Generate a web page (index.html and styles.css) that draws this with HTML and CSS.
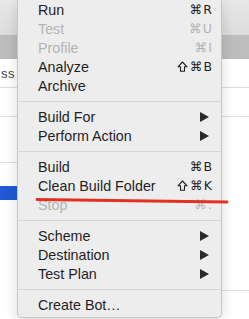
FILE: index.html
```html
<!DOCTYPE html>
<html lang="en">
<head>
  <meta charset="UTF-8">
  <title>Product Menu</title>
  <link rel="stylesheet" href="styles.css">
</head>
<body>
  <div class="window">
    <div class="toolbar"></div>
    <div class="tabbar"></div>
    <div class="content">
      <div class="side">
        <div class="row row-text">ss</div>
        <div class="row"></div>
        <div class="row row-tall"></div>
        <div class="row-selected"></div>
      </div>
      <div class="main">
        <div class="row"></div>
        <div class="row"></div>
        <div class="row row-long"></div>
      </div>
    </div>
  </div>

  <!-- Product menu -->
  <div class="menu">
    <div class="item"><span>Run</span><span class="keys">⌘R</span></div>
    <div class="item disabled"><span>Test</span><span class="keys">⌘U</span></div>
    <div class="item disabled"><span>Profile</span><span class="keys">⌘I</span></div>
    <div class="item"><span>Analyze</span><span class="keys"><svg class="shift" viewBox="0 0 11 11"><path d="M5.5 1 L10 5.8 H7.5 V10.2 H3.5 V5.8 H1 Z"/></svg>⌘B</span></div>
    <div class="item"><span>Archive</span></div>
    <div class="separator"></div>
    <div class="item"><span>Build For</span><span class="arrow"></span></div>
    <div class="item"><span>Perform Action</span><span class="arrow"></span></div>
    <div class="separator"></div>
    <div class="item"><span>Build</span><span class="keys">⌘B</span></div>
    <div class="item"><span>Clean Build Folder</span><span class="keys"><svg class="shift" viewBox="0 0 11 11"><path d="M5.5 1 L10 5.8 H7.5 V10.2 H3.5 V5.8 H1 Z"/></svg>⌘K</span></div>
    <div class="item disabled"><span>Stop</span><span class="keys">⌘.</span></div>
    <div class="separator"></div>
    <div class="item"><span>Scheme</span><span class="arrow"></span></div>
    <div class="item"><span>Destination</span><span class="arrow"></span></div>
    <div class="item"><span>Test Plan</span><span class="arrow"></span></div>
    <div class="separator"></div>
    <div class="item"><span>Create Bot…</span></div>
  </div>

  <!-- Annotation stroke -->
  <svg class="strike" width="249" height="319" viewBox="0 0 249 319">
    <line x1="37" y1="199.5" x2="227" y2="202" stroke="#e2321f" stroke-width="2.8" stroke-linecap="round"/>
  </svg>
</body>
</html>
```

FILE: styles.css
```css
* {
  margin: 0;
  padding: 0;
  box-sizing: border-box;
}
:root {
  --menu-bg: #ededed;
  --menu-border: #c6c6c6;
  --text: #1f1f1f;
  --text-disabled: #b3b3b3;
  --separator: #d6d6d6;
  --line: #dedede;
  --selection: #2358d6;
}
body {
  width: 249px;
  height: 319px;
  overflow: hidden;
  background: #fff;
  font-family: "Liberation Sans", Arial, sans-serif;
  color: var(--text);
}

/* Window behind the menu */
.toolbar {
  height: 35px;
  background: linear-gradient(#e8e8e8, #dcdcdc);
}
.tabbar {
  height: 24px;
  background: #bdbdbd;
}
.content {
  display: grid;
  grid-template-columns: 120px 1fr;
}
.row {
  height: 29px;
  border-bottom: 1px solid var(--line);
}
.row-text {
  font-size: 13px;
  line-height: 29px;
  color: #444;
  padding-left: 1px;
  letter-spacing: 0.5px;
}
.row-tall {
  height: 46px;
}
.row-selected {
  height: 14px;
  margin-top: 23px;
  background: var(--selection);
}
.row-long {
  height: 174px;
}

/* Menu */
.menu {
  position: absolute;
  left: 17px;
  top: 0;
  width: 205px;
  padding-bottom: 3px;
  background: var(--menu-bg);
  border: 1px solid var(--menu-border);
  border-top: none;
  border-radius: 0 0 5px 5px;
  box-shadow: 0 4px 14px rgba(0, 0, 0, 0.14);
}
.item {
  height: 19px;
  display: flex;
  justify-content: space-between;
  align-items: center;
  padding: 0 9px 0 20px;
  font-size: 14.3px;
  white-space: nowrap;
}
.item.disabled {
  color: var(--text-disabled);
}
.keys {
  display: flex;
  align-items: center;
  font-family: "DejaVu Sans", sans-serif;
  font-size: 12.5px;
  letter-spacing: 1px;
  margin-right: -1px;
}
.shift {
  width: 11px;
  height: 11px;
  margin-right: 2px;
  fill: none;
  stroke: currentColor;
  stroke-width: 1.1;
  stroke-linejoin: round;
}
.arrow {
  width: 0;
  height: 0;
  margin-right: 3px;
  border-top: 5px solid transparent;
  border-bottom: 5px solid transparent;
  border-left: 9px solid #2a2a2a;
}
.separator {
  height: 12px;
  display: flex;
  align-items: center;
}
.separator::before {
  content: "";
  flex: 1;
  height: 1px;
  background: var(--separator);
}

/* Red annotation line over the menu */
.strike {
  position: absolute;
  left: 0;
  top: 0;
  pointer-events: none;
}
```
